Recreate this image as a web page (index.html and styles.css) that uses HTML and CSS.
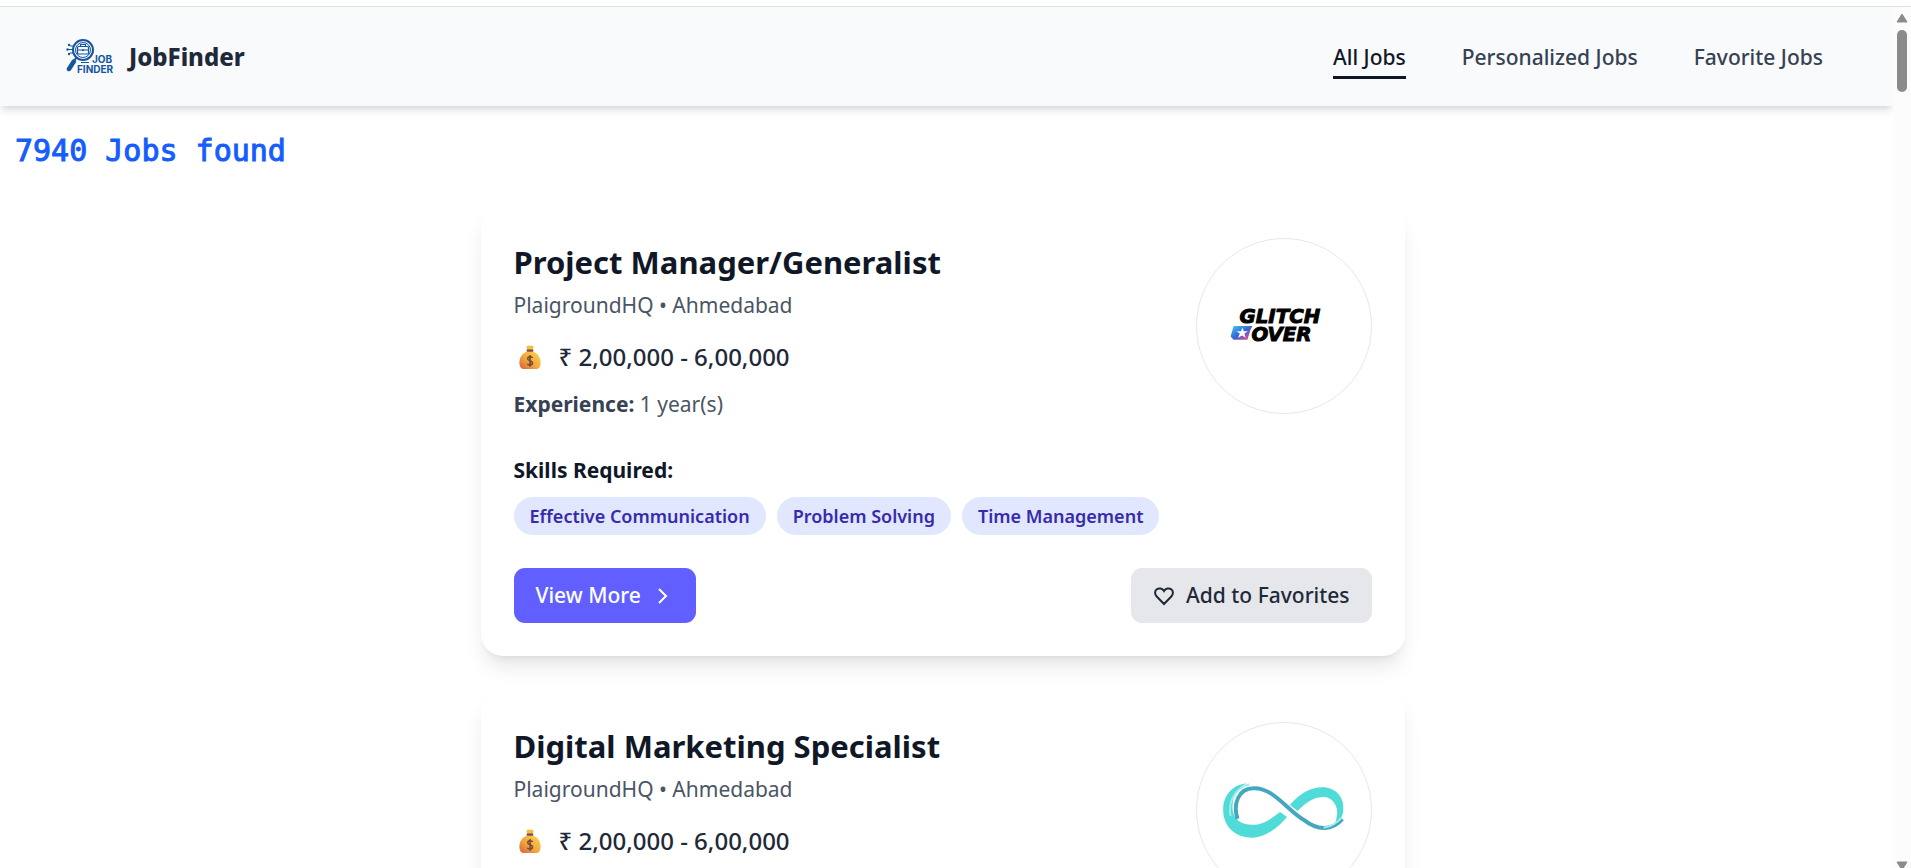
FILE: index.html
```
<!DOCTYPE html>
<html lang="en">
<head>
<meta charset="utf-8">
<title>JobFinder</title>
<meta name="viewport" content="width=device-width, initial-scale=1">
<link rel="stylesheet" href="styles.css">
</head>
<body>
<svg class="defs" aria-hidden="true">
  <defs>
    <linearGradient id="bag-fill" x1="1" y1="0" x2="0" y2="1">
      <stop offset="0.1" stop-color="#fbd04b"/><stop offset="0.55" stop-color="#f0a73c"/><stop offset="1" stop-color="#d9603a"/>
    </linearGradient>
    <symbol id="bag" viewBox="0 0 22 24">
      <path d="M7.5 1.8Q9 0 10.8.9Q13 0 14.6 1.8L14 5H8z" fill="#f6bb45"/>
      <path d="M8 6.5C3.500 8 .4 12.500.4 17.500C.4 21.500 2 24 4.500 24H17.500C20 24 21.600 21.500 21.600 17.500C21.600 12.500 18.500 8 14 6.500z" fill="url(#bag-fill)"/>
      <rect x="7.600" y="4.600" width="6.800" height="2.200" rx="1" fill="#7d4b3c"/>
      <path d="M13.600 12.800C12.800 11.200 8.700 11.300 8.700 13.700C8.700 16.200 13.500 15.300 13.500 18C13.500 20.400 9.100 20.500 8.400 18.700M11.100 10V21.800" fill="none" stroke="#75483f" stroke-width="1.500"/>
    </symbol>
  </defs>
</svg>
<div class="window">
  <div class="page">
    <header class="navbar">
      <a class="brand" href="#">
        <svg class="brand-logo" viewBox="0 0 50 36" aria-hidden="true">
          <g fill="none" stroke="#14559f">
            <circle cx="17" cy="11" r="10" stroke-width="2"/>
            <circle cx="17" cy="11" r="7.500" stroke-width="1"/>
            <path d="M10.500 18.500L8.500 21" stroke-width="2"/>
            <path d="M7.800 22.500L3 30" stroke-width="4.500" stroke-linecap="round"/>
            <rect x="11.500" y="7.500" width="11" height="7.500" rx="1" stroke-width="1.200"/>
            <path d="M14.500 7.500V5.500H19.500V7.500M11.500 11H22.500" stroke-width="1.200"/>
            <path d="M7 7H4.500L3 5.500M6.500 10.500H1M7 14H4L2.500 15.500M15 23.500H23" stroke-width="1"/>
          </g>
          <g fill="#14559f"><circle cx="3" cy="6" r="1.200"/><circle cx="1.500" cy="10.500" r="1.200"/><circle cx="3" cy="15" r="1.200"/><circle cx="17" cy="11.200" r="1"/></g>
          <text class="logo-word" x="26" y="24">JOB</text>
          <text class="logo-word" x="11" y="34">FINDER</text>
        </svg>
        <span class="brand-name">JobFinder</span>
      </a>
      <nav class="links">
        <a class="link active" href="#">All Jobs</a>
        <a class="link" href="#">Personalized Jobs</a>
        <a class="link" href="#">Favorite Jobs</a>
      </nav>
    </header>
    <main class="content">
      <h1 class="count">7940 Jobs found</h1>
      <div class="jobs">
        <article class="card">
          <div class="summary">
            <div class="details">
              <h2 class="title">Project Manager/Generalist</h2>
              <p class="company">PlaigroundHQ • Ahmedabad</p>
              <p class="salary"><svg class="bag" aria-hidden="true"><use href="#bag"/></svg><span>₹ 2,00,000 - 6,00,000</span></p>
              <p class="experience"><strong>Experience:</strong> 1 year(s)</p>
            </div>
            <svg class="avatar" viewBox="0 0 176 176" role="img" aria-label="Glitch Over">
              <defs>
                <linearGradient id="glitch" x1="0" y1="0" x2="1" y2="1">
                  <stop offset="0" stop-color="#3fd0ee"/><stop offset="0.5" stop-color="#3765d8"/><stop offset="0.9" stop-color="#e5488a"/>
                </linearGradient>
              </defs>
              <text class="glitch-word" x="43" y="85">GLITCH</text>
              <path d="M37 88H56L54 92L51 102H37L34 98.500z" fill="url(#glitch)"/>
              <path d="M46 89.500L47.300 93.300H51.500L48 95.700L49.200 100L45.600 97.500L41.500 100L43.300 95.700L40 93.300H44.500z" fill="#fff"/>
              <text class="glitch-word" x="55" y="103">OVER</text>
            </svg>
          </div>
          <h3 class="skills-title">Skills Required:</h3>
          <ul class="skills">
            <li class="skill">Effective Communication</li>
            <li class="skill">Problem Solving</li>
            <li class="skill">Time Management</li>
          </ul>
          <div class="actions">
            <button class="button primary" type="button">View More
              <svg class="chevron" viewBox="0 0 22 22" aria-hidden="true"><path d="M7 4L14 11L7 18"/></svg>
            </button>
            <button class="button muted" type="button">
              <svg class="heart" viewBox="0 0 22 22" aria-hidden="true"><path d="M11 19L3.700 11.500C1.500 9.200 1.600 6.200 3.500 4.600C5.800 2.700 9.500 3.300 11 6C12.500 3.300 16.200 2.700 18.500 4.600C20.400 6.200 20.500 9.200 18.300 11.500z"/></svg>
              Add to Favorites
            </button>
          </div>
        </article>
        <article class="card">
          <div class="summary">
            <div class="details">
              <h2 class="title">Digital Marketing Specialist</h2>
              <p class="company">PlaigroundHQ • Ahmedabad</p>
              <p class="salary"><svg class="bag" aria-hidden="true"><use href="#bag"/></svg><span>₹ 2,00,000 - 6,00,000</span></p>
            </div>
            <svg class="avatar" viewBox="0 0 176 176" role="img" aria-label="Infinity ribbon">
              <path d="M50 61C34 63 26 75 26.500 89C27 105 39 116 56 116C72 115 83 104 91 95L84 90C75 97 67 103 56 103C44 103 37 97 36 88C35 76 40 66 50 61z" fill="#4fdcd8"/>
              <path d="M94 83C105 70 116 65 127 65C140 65 149 75 148 87C148 94 145 99 139 103C142 95 143 89 140 83C137 76 131 74 125 75C116 76 108 82 102 89z" fill="#4fdcd8"/>
              <path d="M41 97C36 82 42 66 57 66C77 65 91 88 108 98C122 109 137 109 147 97" fill="none" stroke="#43a7c0" stroke-width="4"/>
              <path d="M34 94C31 80 39 65 53 62M146 96C141 102 135 105 128 106" fill="none" stroke="#a5ece8" stroke-width="2"/>
            </svg>
          </div>
        </article>
      </div>
    </main>
  </div>
  <div class="scrollbar" aria-hidden="true">
    <svg class="arrow" viewBox="0 0 12 10"><path d="M6 1L11 9H1z"/></svg>
    <div class="thumb"></div>
    <svg class="arrow down" viewBox="0 0 12 10"><path d="M1 1H11L6 9z"/></svg>
  </div>
</div>
</body>
</html>
```
FILE: styles.css
```
* { box-sizing: border-box; }

body {
  margin: 0;
  background: #fff;
  color: #101828;
  font-family: "Noto Sans", "Open Sans", sans-serif;
  font-size: 21px;
  line-height: 33px;
}

h1, h2, h3, p, ul { margin: 0; padding: 0; }

.defs { position: absolute; width: 0; height: 0; }

.window {
  display: grid;
  grid-template-columns: 1fr 18px;
  height: 100vh;
  padding-top: 6px;
  overflow: hidden;
}

.page { border-top: 1px solid #dfe2dc; min-width: 0; min-height: 0; overflow: hidden; }

.navbar {
  display: flex;
  align-items: center;
  justify-content: space-between;
  height: 99px;
  padding: 0 70px 0 66px;
  background: #f8fafc;
  box-shadow: 0 6px 8px -1px rgb(0 0 0 / 0.1), 0 3px 6px -3px rgb(0 0 0 / 0.1);
}

.brand {
  display: flex;
  align-items: center;
  gap: 13px;
  color: #1e2939;
  text-decoration: none;
}
.brand-logo { width: 50px; height: 36px; }
.logo-word { font: 700 10px "Inter", sans-serif; fill: #14559f; }
.brand-name { font-size: 24px; font-weight: 800; }

.links { display: flex; gap: 56px; }
.link {
  padding: 4px 0 2px;
  border: solid transparent;
  border-width: 3px 0;
  color: #364153;
  font-weight: 500;
  text-decoration: none;
}
.link.active { border-bottom-color: #101828; color: #101828; }

.content { padding: 23px 8px 0 0; }

.count {
  padding-left: 15px;
  color: #155dfc;
  font: 400 30px/44px "DejaVu Sans Mono", monospace;
  -webkit-text-stroke: 1px #155dfc;
}

.jobs {
  display: flex;
  flex-direction: column;
  gap: 33px;
  max-width: 924px;
  margin: 32px auto 0;
}

.card {
  padding: 33px;
  border-radius: 22px;
  background: #fff;
  box-shadow: 0 14px 21px -4px rgb(0 0 0 / 0.1), 0 6px 8px -6px rgb(0 0 0 / 0.1);
}

.summary { display: flex; justify-content: space-between; }
.details { padding-top: 2px; }
.title { font-size: 31px; font-weight: 700; line-height: 44px; }
.company { margin-top: 5px; color: #4a5565; }
.salary {
  display: flex;
  align-items: center;
  gap: 18px;
  margin-top: 16px;
  padding-left: 5px;
  color: #1e2939;
  font-size: 24px;
  font-weight: 500;
  line-height: 38px;
}
.bag { width: 22px; height: 24px; }
.experience { margin-top: 12px; color: #4a5565; }
.experience strong { color: #364153; font-weight: 700; }

.avatar {
  flex: none;
  width: 176px;
  height: 176px;
  border: 1px solid #e5e7eb;
  border-radius: 50%;
}
.glitch-word {
  font: italic 700 20px "DejaVu Sans", sans-serif;
  fill: #000;
  stroke: #000;
  stroke-width: 1px;
}

.skills-title { margin-top: 33px; font-size: 21px; font-weight: 700; }
.skills { display: flex; flex-wrap: wrap; gap: 11px; margin-top: 10px; list-style: none; }
.skill {
  padding: 5px 16px;
  border-radius: 19px;
  background: #e0e7ff;
  color: #372aac;
  font-size: 18px;
  font-weight: 600;
  line-height: 28px;
}

.actions { display: flex; justify-content: space-between; margin-top: 33px; }
.button {
  display: flex;
  align-items: center;
  gap: 11px;
  height: 55px;
  padding: 0 22px;
  border: 0;
  border-radius: 11px;
  font: 500 21px/33px "Noto Sans", "Open Sans", sans-serif;
}
.primary { background: #615fff; color: #fff; }
.muted { background: #e5e7eb; color: #1e2939; }
.chevron, .heart { width: 22px; height: 22px; fill: none; stroke: currentColor; stroke-width: 2; }

.scrollbar {
  display: flex;
  flex-direction: column;
  align-items: center;
  padding-top: 6px;
  border-top: 1px solid #dfe2dc;
  background: #fcfcfc;
}
.arrow { width: 12px; height: 10px; fill: #8b8b8b; stroke: #8b8b8b; stroke-width: 1; stroke-linejoin: round; }
.thumb { width: 10px; height: 62px; margin-top: 7px; border-radius: 5px; background: #8b8b8b; }
.down { margin-top: auto; margin-bottom: -3px; }
```
